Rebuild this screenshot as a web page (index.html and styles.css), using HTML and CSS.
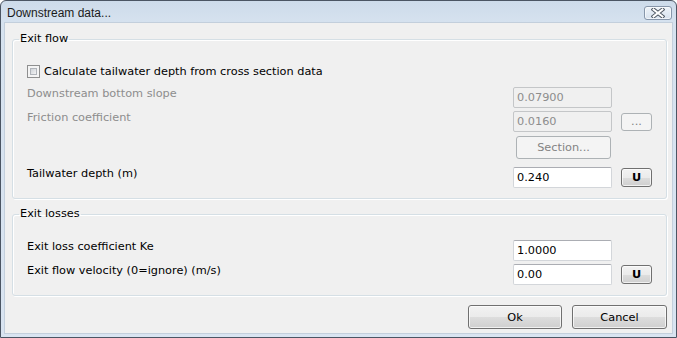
FILE: index.html
```html
<!DOCTYPE html>
<html lang="en">
<head>
  <meta charset="UTF-8">
  <meta name="viewport" content="width=device-width, initial-scale=1.0">
  <title>Downstream data...</title>
  <link rel="stylesheet" href="styles.css">
</head>
<body>
  <!-- Finestra di dialogo -->
  <div class="window">
    <div class="titlebar">
      <span class="title">Downstream data...</span>
      <button class="close-btn" title="Close">
        <svg width="14" height="10" viewBox="0 0 14 10">
          <path d="M2.5 1.5 L11.5 8.5 M11.5 1.5 L2.5 8.5" stroke="#4d5661" stroke-width="4" stroke-linecap="square"/>
          <path d="M2.5 1.5 L11.5 8.5 M11.5 1.5 L2.5 8.5" stroke="#fff" stroke-width="2" stroke-linecap="square"/>
        </svg>
      </button>
    </div>

    <div class="client">
      <!-- Exit flow -->
      <fieldset class="group group-flow">
        <legend>Exit flow</legend>
        <label class="check-row">
          <span class="checkbox"><span></span></span>
          <span>Calculate tailwater depth from cross section data</span>
        </label>
        <div class="row row-slope">
          <span class="label disabled">Downstream bottom slope</span>
          <input class="field" type="text" value="0.07900" disabled>
        </div>
        <div class="row">
          <span class="label disabled">Friction coefficient</span>
          <input class="field" type="text" value="0.0160" disabled>
          <button class="btn small" disabled>...</button>
        </div>
        <div class="row row-section">
          <span></span>
          <button class="btn section" disabled>Section...</button>
        </div>
        <div class="row row-tail">
          <span class="label">Tailwater depth (m)</span>
          <input class="field" type="text" value="0.240">
          <button class="btn small unit">U</button>
        </div>
      </fieldset>

      <!-- Exit losses -->
      <fieldset class="group group-losses">
        <legend>Exit losses</legend>
        <div class="row">
          <span class="label">Exit loss coefficient Ke</span>
          <input class="field" type="text" value="1.0000">
        </div>
        <div class="row">
          <span class="label">Exit flow velocity (0=ignore) (m/s)</span>
          <input class="field" type="text" value="0.00">
          <button class="btn small unit">U</button>
        </div>
      </fieldset>

      <div class="actions">
        <button class="btn action ok">Ok</button>
        <button class="btn action">Cancel</button>
      </div>
    </div>
  </div>
</body>
</html>
```

FILE: styles.css
```css
/* Stile generale */
body {
  margin: 0;
  padding: 0;
  width: 677px;
  height: 338px;
  overflow: hidden;
  font-family: 'DejaVu Sans', 'Liberation Sans', sans-serif;
  font-size: 11.3px;
  color: #000;
}

/* Finestra */
.window {
  box-sizing: border-box;
  width: 677px;
  height: 338px;
  border: 1px solid #4b5563;
  border-radius: 6px 6px 0 0;
  background: linear-gradient(to bottom, #cddbea 0, #d6e2ef 22px, #d9e4f1 100%);
  padding: 0 4px 4px;
}

.titlebar {
  height: 22px;
  display: flex;
  align-items: center;
  justify-content: space-between;
  margin: 0 -4px;
  padding: 0 4px 0 6px;
}

.title {
  font-family: 'Liberation Sans', 'Noto Sans', sans-serif;
  font-size: 12px;
  color: #1b1b1b;
  padding-top: 1px;
}

.close-btn {
  width: 28px;
  height: 14px;
  margin-top: 2px;
  padding: 0;
  display: flex;
  align-items: center;
  justify-content: center;
  border: 1px solid #8796aa;
  border-radius: 3px;
  background: linear-gradient(to bottom, #eef3f9, #d8e2ee);
  box-shadow: inset 0 0 0 1px rgba(255, 255, 255, 0.6);
}

/* Area client */
.client {
  box-sizing: border-box;
  height: 310px;
  background: #f0f0f0;
  padding: 9px 5px 5px 7px;
  box-shadow: 0 0 0 1px #c3cfdc;
}

.group {
  margin: 0;
  padding: 0 14px;
  border: 1px solid #d5dfe5;
  border-radius: 3px;
  box-shadow: inset 1px 1px 0 #fff, 1px 1px 0 #fff;
}

.group legend {
  height: 14px;
  line-height: 14px;
  padding: 0 1px;
  margin-left: -8px;
}

.group-flow {
  padding-top: 15px;
  padding-bottom: 10px;
}

.group-losses {
  margin-top: 8px;
  padding-top: 16px;
  padding-bottom: 10px;
}

/* Righe */
.check-row {
  height: 21px;
  display: flex;
  align-items: center;
  gap: 4px;
}

.checkbox {
  box-sizing: border-box;
  width: 13px;
  height: 13px;
  border: 1px solid #8e8f8f;
  background: #f4f4f4;
  padding: 2px;
}

.checkbox span {
  display: block;
  box-sizing: border-box;
  width: 100%;
  height: 100%;
  border: 1px solid #b0b4ba;
  background: linear-gradient(135deg, #cfd3d8, #f1f2f3);
}

.row {
  display: grid;
  grid-template-columns: 1fr 99px 31px;
  column-gap: 9px;
  align-items: center;
  height: 21px;
  margin-top: 3px;
}

.row-slope {
  margin-top: 5px;
}

.row-section {
  height: 23px;
  margin-top: 4px;
}

.row-tail {
  margin-top: 8px;
}

/* Le etichette stanno in alto rispetto al campo */
.label {
  align-self: start;
  line-height: 14px;
}

.label.disabled {
  color: #8d8d8d;
}

.field {
  box-sizing: border-box;
  width: 99px;
  height: 21px;
  margin: 0;
  padding: 0 3px;
  font: inherit;
  color: #000;
  background: #fff;
  border: 1px solid #d3d6da;
  border-top-color: #abadb3;
  border-radius: 2px;
  outline: none;
}

.field:disabled {
  background: #f0f0f0;
  color: #8d8d8d;
  border-color: #c4c6c8;
}

/* Bottoni */
.btn {
  box-sizing: border-box;
  margin: 0;
  padding: 0;
  font: inherit;
  color: #000;
  border: 1px solid #707070;
  border-radius: 3px;
  background: linear-gradient(to bottom, #f2f2f2 0, #ebebeb 50%, #dddddd 51%, #cfcfcf 100%);
  box-shadow: inset 0 0 0 1px rgba(255, 255, 255, 0.7);
}

.btn:disabled {
  color: #838383;
  border-color: #adb2b5;
  background: #f4f4f4;
  box-shadow: none;
}

.btn.small {
  width: 31px;
  height: 18px;
}

.btn.unit {
  font-weight: bold;
  height: 19px;
}

.btn.section {
  width: 95px;
  height: 23px;
  margin-left: 3px;
}

.actions {
  display: flex;
  justify-content: flex-end;
  gap: 10px;
  margin-top: 9px;
}

.btn.action {
  width: 95px;
  height: 24px;
}

.btn.ok {
  width: 94px;
}
```
